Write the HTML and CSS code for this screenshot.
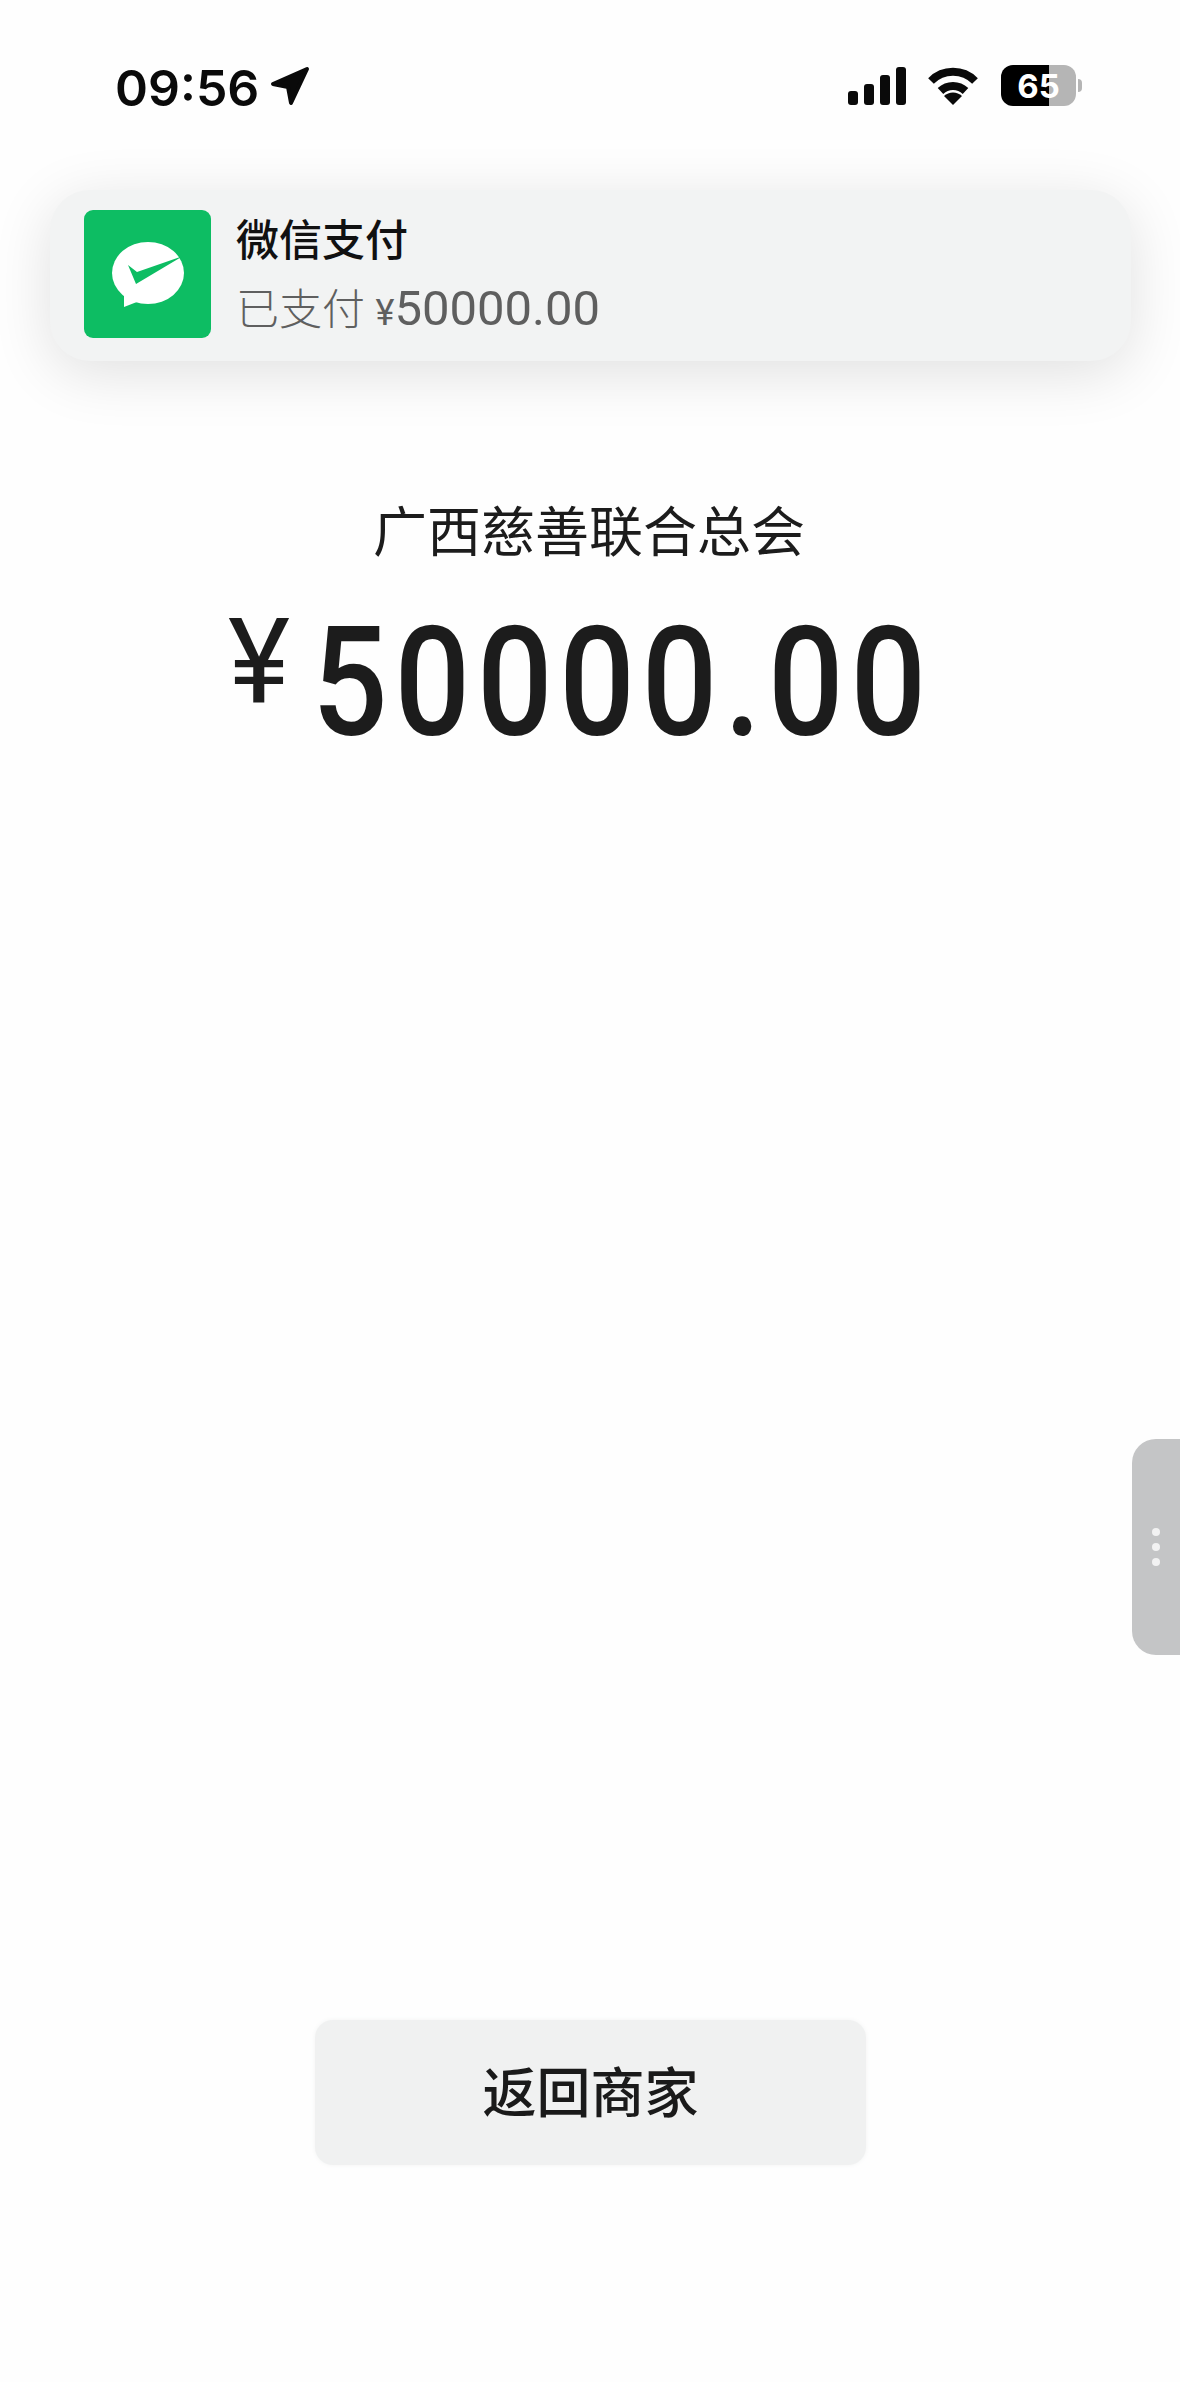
FILE: index.html
```html
<!DOCTYPE html>
<html lang="zh-CN">
<head>
  <meta charset="UTF-8" />
  <title>支付成功</title>
  <link rel="stylesheet" href="styles.css">
</head>
<body>
  <div class="status-bar">
    <div class="status-left">
      <span class="time">09:56</span>
      <svg class="loc-arrow" viewBox="0 0 40 40"><path d="M3 18 L37 3 L21 37 L18 21 Z" /></svg>
    </div>
    <div class="status-right">
      <div class="signal">
        <span class="bar bar1"></span>
        <span class="bar bar2"></span>
        <span class="bar bar3"></span>
        <span class="bar bar4"></span>
      </div>
      <svg class="wifi" viewBox="0 0 50 38">
        <path class="wifi-arc" d="M3 14 A31 31 0 0 1 47 14" />
        <path class="wifi-arc" d="M12.5 24 A18 18 0 0 1 37.5 24" />
        <path d="M25 38 L16 29 A13 13 0 0 1 34 29 Z" />
      </svg>
      <div class="battery"><span>65</span></div>
      <div class="battery-nub"></div>
    </div>
  </div>

  <div class="notice">
    <svg class="notice-icon" viewBox="0 0 127 128">
      <rect width="127" height="128" rx="9" fill="#0dbd63" />
      <ellipse cx="64" cy="63" rx="36" ry="31" fill="#fff" />
      <path d="M40 84 L40 97 L58 90 Z" fill="#fff" />
      <path d="M44 55 L52 74 L99 46 L53 62 Z" fill="#0dbd63" />
    </svg>
    <div class="notice-text">
      <div class="notice-title">微信支付</div>
      <div class="notice-sub">已支付 <span class="sub-yen">¥</span><span class="sub-num">50000.00</span></div>
    </div>
  </div>

  <div class="merchant">广西慈善联合总会</div>
  <div class="amount">
    <span class="yen">¥</span>
    <span class="num">50000.00</span>
  </div>

  <button class="back-btn">返回商家</button>

  <div class="side-handle">
    <i></i><i></i><i></i>
  </div>
</body>
</html>
```

FILE: styles.css
```css
html, body {
  margin: 0;
  height: 2382px;
  overflow: hidden;
}
body {
  display: flex;
  flex-direction: column;
  background-color: #fefefe;
  color: #1c1c1c;
  font-family: Roboto, "Noto Sans CJK SC", sans-serif;
}

/* status bar */
.status-bar {
  display: flex;
  justify-content: space-between;
  align-items: center;
  height: 41px;
  margin-top: 65px;
  padding: 0 98px 0 115px;
}
.status-left, .status-right {
  display: flex;
  align-items: center;
}
.time {
  font-family: Inter, sans-serif;
  font-size: 50px;
  font-weight: 600;
  line-height: 47px;
  padding-top: 6px;
  color: #0a0a0a;
}
.loc-arrow {
  width: 40px;
  height: 40px;
  margin-left: 11px;
}
.loc-arrow path {
  fill: #0a0a0a;
  stroke: #0a0a0a;
  stroke-width: 4;
  stroke-linejoin: round;
}
.signal {
  display: flex;
  align-items: flex-end;
  gap: 6px;
  height: 38px;
}
.bar {
  width: 10px;
  background: #0a0a0a;
  border-radius: 3px;
}
.bar1 { height: 14px; }
.bar2 { height: 21px; }
.bar3 { height: 30px; }
.bar4 { height: 38px; }
.wifi {
  width: 50px;
  height: 38px;
  margin-left: 22px;
  fill: #0a0a0a;
}
.wifi-arc {
  fill: none;
  stroke: #0a0a0a;
  stroke-width: 8;
}
.battery {
  display: flex;
  align-items: center;
  justify-content: center;
  width: 75px;
  height: 41px;
  margin-left: 23px;
  border-radius: 12px;
  background: linear-gradient(90deg, #000 64%, #b5b5b5 64%);
  color: #fff;
  font-family: Inter, sans-serif;
  font-size: 33px;
  font-weight: 700;
}
.battery-nub {
  width: 4px;
  height: 13px;
  margin-left: 2px;
  border-radius: 0 4px 4px 0;
  background: #b5b5b5;
}

/* notification */
.notice {
  display: flex;
  align-items: center;
  height: 171px;
  margin: 84px 49px 0 50px;
  padding: 0 0 3px 34px;
  box-sizing: border-box;
  border-radius: 40px;
  background: #f2f3f3;
  box-shadow: 0 12px 60px rgba(0, 0, 0, 0.12);
}
.notice-icon {
  width: 127px;
  height: 128px;
  flex: none;
}
.notice-text {
  margin-left: 25px;
  padding-top: 6px;
}
.notice-title {
  font-size: 43px;
  line-height: 67px;
  font-weight: 500;
  color: #111;
}
.notice-sub {
  font-size: 43px;
  line-height: 67px;
  font-weight: 300;
  color: #5f5f5f;
}
.sub-yen {
  font-size: 36px;
  font-weight: 400;
}
.sub-num {
  font-size: 49px;
  font-weight: 400;
}

/* amount */
.merchant {
  margin-top: 140px;
  padding-right: 2px;
  text-align: center;
  font-size: 54px;
  line-height: 66px;
  font-weight: 400;
}
.amount {
  display: flex;
  align-items: flex-start;
  height: 150px;
  margin-top: 41px;
  padding-left: 228px;
}
.yen {
  font-size: 118px;
  line-height: 110px;
}
.num {
  margin-left: 22px;
  font-size: 153px;
  font-weight: 500;
  line-height: 150px;
  letter-spacing: 7.8px;
  transform: scaleX(0.87);
  transform-origin: left center;
}

/* button */
.back-btn {
  width: 551px;
  height: 145px;
  margin: auto 0 217px 315px;
  padding-bottom: 8px;
  border: 0;
  border-radius: 18px;
  background: #f0f1f1;
  box-shadow: 0 0 5px #f3f4f4;
  color: #1a1a1a;
  font-family: "Noto Sans CJK SC", sans-serif;
  font-size: 54px;
  font-weight: 500;
}

/* floating handle on the right edge */
.side-handle {
  position: absolute;
  top: 1439px;
  right: 0;
  width: 48px;
  height: 216px;
  display: flex;
  flex-direction: column;
  gap: 7px;
  align-items: center;
  justify-content: center;
  border-radius: 24px 0 0 24px;
  background: #c4c5c6;
}
.side-handle i {
  width: 8px;
  height: 8px;
  border-radius: 50%;
  background: #f2f2f2;
}
```
